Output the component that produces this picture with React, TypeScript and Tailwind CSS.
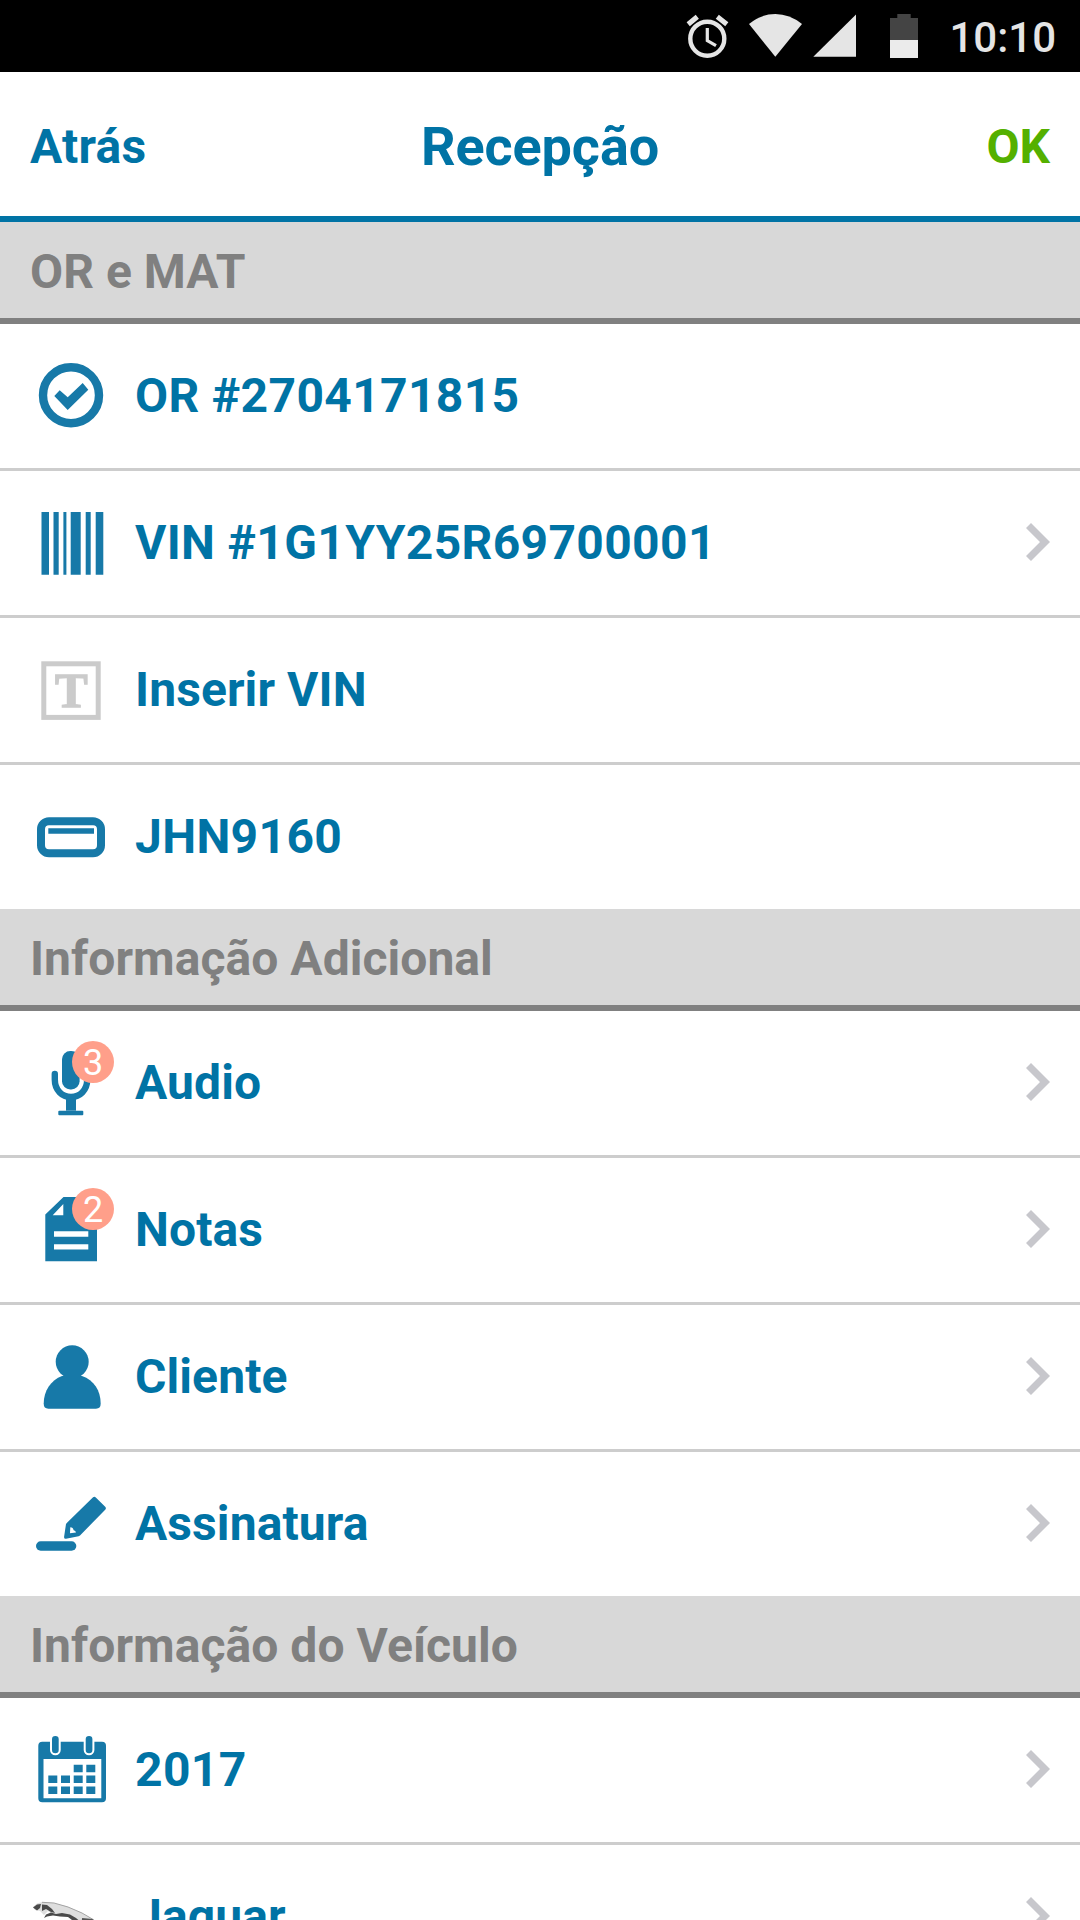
import type { ReactNode } from 'react';
import { clsx } from 'clsx';

type RowProps = {
  icon: ReactNode;
  label: string;
  badge?: number;
  chevron?: boolean;
};

const StatusBar = () => (
  <div className="flex h-[72px] shrink-0 items-center justify-end bg-black pr-6 text-[#e5e5e5]">
    <svg width="256" height="72" viewBox="680 0 256 72" fill="none">
      <g stroke="#e5e5e5">
        <circle cx="707.3" cy="38.7" r="17" strokeWidth="4.4" />
        <path d="M707.3 28V40.6L716 45.7" strokeWidth="3.2" />
        <path d="M688.2 24.3L697.3 16.8M717.3 16.8L726.8 24.3" strokeWidth="5" />
      </g>
      <path d="M749 24Q761 14 775.3 14T802 24L775.3 56.7Z" fill="#e5e5e5" />
      <path d="M813.3 56.8L856 14.5V56.8Z" fill="#e5e5e5" />
      <path d="M890 18H897.3V14H910.7V18H918V40H890Z" fill="#444" />
      <path d="M890 40H918V58H890Z" fill="#ebebeb" />
    </svg>
    <span className="ml-[13px] pt-[3px] text-[42px] leading-none font-medium">10:10</span>
  </div>
);

const Header = () => (
  <header className="grid h-[150px] shrink-0 grid-cols-3 items-center border-b-6 border-[#0073a5] px-[30px] pt-1 font-bold text-[#0073a5]">
    <span className="pt-0.5 text-5xl tracking-[0.2px]">Atrás</span>
    <h1 className="pt-px text-center text-[54px] leading-none tracking-[-0.1px]">Recepção</h1>
    <span className="pt-0.5 text-right text-5xl text-[#54b000]">OK</span>
  </header>
);

const Section = ({ title, children }: { title: string; children: ReactNode }) => (
  <section className="shrink-0">
    <h2 className="flex h-[102px] items-center border-b-6 border-[#808080] bg-[#d8d8d8] px-[30px] pt-[3px] text-5xl font-bold tracking-[0.05px] text-[#808080]">
      {title}
    </h2>
    <ul className="divide-y-3 divide-[#cdcdcd]">{children}</ul>
  </section>
);

const Chevron = () => (
  <svg className="mb-0.5" width="24" height="38" viewBox="0 0 24 38" fill="#c7c7cc">
    <path d="M5 0L24 19L5 38L0 33L14 19L0 5Z" />
  </svg>
);

const Row = ({ icon, label, badge, chevron }: RowProps) => (
  <li className="box-content flex h-[144px] items-center px-[30px]">
    <div className="relative h-[144px] w-[105px]">
      <svg width="105" height="144" viewBox="30 0 105 144" fill="#1779a8">
        {icon}
      </svg>
      {badge && (
        <span className="absolute top-[30px] left-[42px] flex size-[42px] items-center justify-center rounded-full bg-[#ff9f8a] pt-px text-4xl leading-none text-white">
          {badge}
        </span>
      )}
    </div>
    <span
      className={clsx(
        'flex-1 text-5xl font-bold text-[#0073a5]',
        /\d/.test(label) ? 'tracking-[0.35px]' : 'tracking-[0.1px]'
      )}
    >
      {label}
    </span>
    {chevron && <Chevron />}
  </li>
);

const CheckIcon = (
  <>
    <circle cx="71" cy="71.2" r="28" fill="none" stroke="#1779a8" strokeWidth="8.4" />
    <path d="M54.3 72L59.7 66.3L67.7 73.3L82.7 59L88.3 65.7L67.7 86Z" />
  </>
);

const BarcodeIcon = (
  <path d="M41.5 41h7.5v62.7h-7.5zM53.5 41h5.2v62.7h-5.2zM63.4 41h3v62.7h-3zM70.7 41h10v62.7h-10zM85.7 41h5v62.7h-5zM95.7 41h7.6v62.7h-7.6z" />
);

const TextIcon = (
  <>
    <rect x="43.8" y="45.8" width="54.4" height="53.6" fill="none" stroke="#cbcbcb" strokeWidth="5" />
    <text
      x="71.3"
      y="89.2"
      textAnchor="middle"
      fill="#cbcbcb"
      stroke="#cbcbcb"
      strokeWidth="1.4"
      className="font-['Liberation_Serif',serif] text-[49px] font-bold"
    >
      T
    </text>
  </>
);

const PlateIcon = (
  <>
    <rect x="41" y="56.3" width="60" height="32" rx="8" fill="none" stroke="#1779a8" strokeWidth="8" />
    <path d="M48.3 63.3H94V68.7H48.3Z" />
  </>
);

const MicIcon = (
  <>
    <rect x="62" y="40" width="17.6" height="38.5" rx="8.3" />
    <path
      d="M54.8 63V68.5C54.8 79 62 86 71 86S87.2 79 87.2 68.5V63"
      fill="none"
      stroke="#1779a8"
      strokeWidth="6.4"
      strokeLinecap="round"
    />
    <path d="M66 86H76V99.7H66Z" />
    <rect x="58.3" y="99.7" width="25" height="4.6" rx="1" />
  </>
);

const NoteIcon = (
  <path
    fillRule="evenodd"
    d="M63.5 39H97V103.3H45.3V56.5ZM63.3 46L52.7 57.2H63.3ZM54 73.3H88.3V78.7H54ZM54 86.3H88.3V91.5H54Z"
  />
);

const PersonIcon = (
  <>
    <circle cx="72.2" cy="56.8" r="16.5" />
    <path d="M62 71H82C94 75 100.7 86 100.7 98.5Q100.7 103.7 96 103.7H48.4Q43.7 103.7 43.7 98.5C43.7 86 51 75 62 71Z" />
  </>
);

const PenIcon = (
  <>
    <rect x="36" y="89.3" width="40.3" height="9.4" rx="4.7" />
    <path
      fillRule="evenodd"
      d="M92.8 45.6Q94.3 44 95.8 45.6L105.2 54.8Q106.6 56.3 105.2 57.8L80 83.4L78.6 84.3L66 86.8Q63.8 87 64.1 84.8L66 72L67 70.7ZM70.3 75.3L70 81.3L76 80.5Q75.7 78.4 73.6 78.2Q73.2 75.5 70.3 75.3Z"
    />
  </>
);

const CalendarIcon = (
  <>
    <path
      fillRule="evenodd"
      d="M42.3 43.7H102Q106 43.7 106 47.7V100.3Q106 104.3 102 104.3H42.3Q38.3 104.3 38.3 100.3V47.7Q38.3 43.7 42.3 43.7ZM43.5 61V100.3H101.3V61Z"
    />
    <g stroke="#fff" strokeWidth="2">
      <rect x="51" y="37" width="8.7" height="19.3" rx="4.3" />
      <rect x="84.7" y="37" width="8.7" height="19.3" rx="4.3" />
    </g>
    <path d="M73.7 66.7h9v7.5h-9zM86.3 66.7h9v7.5h-9z" />
    <path d="M48.3 77.4h9v7.6h-9zM61 77.4h9v7.6h-9zM73.7 77.4h9v7.6h-9zM86.3 77.4h9v7.6h-9z" />
    <path d="M48.3 88.4h9v7.6h-9zM61 88.4h9v7.6h-9zM73.7 88.4h9v7.6h-9zM86.3 88.4h9v7.6h-9z" />
  </>
);

const JaguarIcon = (
  <>
    <path
      d="M33 62L37 58.5L42 57L52 57.8L66 61L80 67L92 74L98 80H84L77 74L68 71L58 71L52 69L48 66L44 70L40 66L35 65Z"
      fill="#dedede"
    />
    <path
      d="M33 62.5L37 59.5L41 59L40 63L37 65.5ZM42 59.5L47 60L52 64L55 68L51 67L46 64L42 66ZM44 73L46 69.5L51 67.5L56 69L62 68L70 69.5L76 73L82 78H76L68 72L60 71.5L53 70.5L47 71.5Z"
      fill="#4a4a4a"
    />
    <path d="M42 57.3L54 58L68 62L82 68L94 75" fill="none" stroke="#a3a3a3" strokeWidth="1" />
    <path d="M82 74L92 75L94 78" fill="none" stroke="#555" strokeWidth="2" />
  </>
);

export default function App() {
  return (
    <div className="flex h-[1920px] w-[1080px] flex-col overflow-hidden bg-white font-[Roboto,sans-serif]">
      <StatusBar />
      <Header />
      <Section title="OR e MAT">
        <Row icon={CheckIcon} label="OR #2704171815" />
        <Row icon={BarcodeIcon} label="VIN #1G1YY25R69700001" chevron />
        <Row icon={TextIcon} label="Inserir VIN" />
        <Row icon={PlateIcon} label="JHN9160" />
      </Section>
      <Section title="Informação Adicional">
        <Row icon={MicIcon} label="Audio" badge={3} chevron />
        <Row icon={NoteIcon} label="Notas" badge={2} chevron />
        <Row icon={PersonIcon} label="Cliente" chevron />
        <Row icon={PenIcon} label="Assinatura" chevron />
      </Section>
      <Section title="Informação do Veículo">
        <Row icon={CalendarIcon} label="2017" chevron />
        <Row icon={JaguarIcon} label="Jaguar" chevron />
      </Section>
    </div>
  );
}
